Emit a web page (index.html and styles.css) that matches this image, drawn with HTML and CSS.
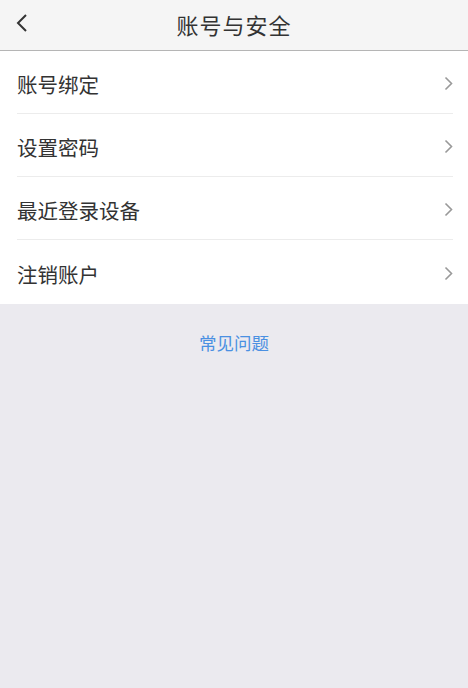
FILE: index.html
```html
<!DOCTYPE html>
<html>
<head>
    <title>账号与安全</title>
    <link rel="stylesheet" href="styles.css">
</head>
<body>
    <div class="header">
        <svg class="back" width="12" height="20" viewBox="0 0 12 20">
            <path d="M10 2 L2 10 L10 18" fill="none" stroke="#333" stroke-width="2"/>
        </svg>
        <h1>账号与安全</h1>
    </div>

    <ul class="menu">
        <li>
            <span>账号绑定</span>
            <svg class="arrow" width="9" height="15" viewBox="0 0 9 15"><path d="M1.5 1.5 L7.5 7.5 L1.5 13.5" fill="none" stroke="#999" stroke-width="1.6"/></svg>
        </li>
        <li>
            <span>设置密码</span>
            <svg class="arrow" width="9" height="15" viewBox="0 0 9 15"><path d="M1.5 1.5 L7.5 7.5 L1.5 13.5" fill="none" stroke="#999" stroke-width="1.6"/></svg>
        </li>
        <li>
            <span>最近登录设备</span>
            <svg class="arrow" width="9" height="15" viewBox="0 0 9 15"><path d="M1.5 1.5 L7.5 7.5 L1.5 13.5" fill="none" stroke="#999" stroke-width="1.6"/></svg>
        </li>
        <li>
            <span>注销账户</span>
            <svg class="arrow" width="9" height="15" viewBox="0 0 9 15"><path d="M1.5 1.5 L7.5 7.5 L1.5 13.5" fill="none" stroke="#999" stroke-width="1.6"/></svg>
        </li>
    </ul>

    <a class="faq" href="#">常见问题</a>
</body>
</html>
```

FILE: styles.css
```css
html, body {
    height: 100%;
}

body {
    margin: 0;
    background: #ebeaef;
    font-family: "Noto Sans CJK SC", "Noto Sans", sans-serif;
    color: #333;
}

.header {
    position: relative;
    height: 50px;
    background: #f5f5f5;
    border-bottom: 1px solid #b5b5b5;
    display: flex;
    align-items: center;
    justify-content: center;
}

.header h1 {
    margin: -3px 0 0;
    font-size: 22px;
    font-weight: normal;
    letter-spacing: 1px;
}

.back {
    position: absolute;
    left: 16px;
    top: 13px;
}

.menu {
    list-style: none;
    margin: 0;
    padding: 0 15px 0 17px;
    background: #fff;
}

.menu li {
    box-sizing: border-box;
    height: 63px;
    display: flex;
    align-items: center;
    justify-content: space-between;
    border-bottom: 1px solid #ececec;
    font-size: 20.5px;
}

.menu li:last-child {
    height: 64px;
    border-bottom: none;
}

.menu li span {
    padding-top: 4px;
}

.arrow {
    margin-top: 2px;
}

.faq {
    display: block;
    text-align: center;
    margin-top: 26px;
    font-size: 17.5px;
    color: #4a90e2;
    text-decoration: none;
}
```
